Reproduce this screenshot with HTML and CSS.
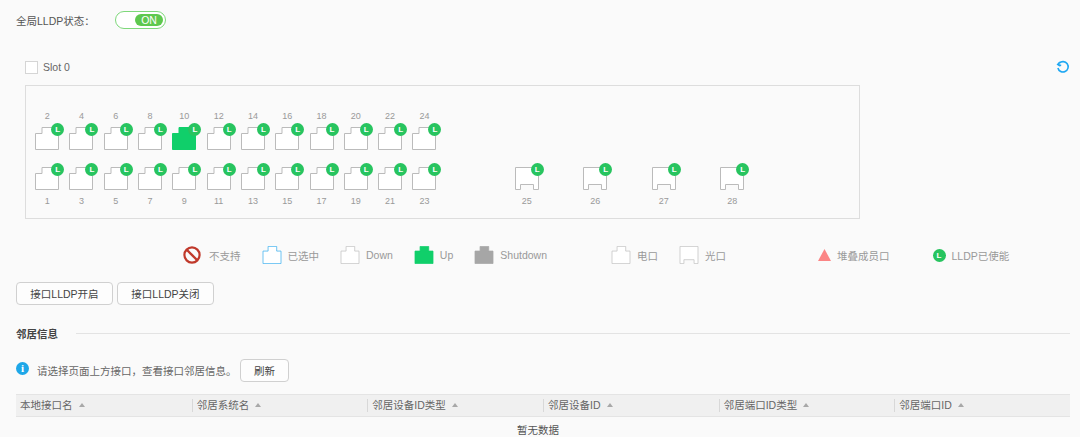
FILE: index.html
```html
<!DOCTYPE html>
<html lang="en">
<head>
    <meta charset="UTF-8">
    <meta name="viewport" content="width=device-width, initial-scale=1.0">
    <title>LLDP</title>
    <link rel="stylesheet" href="styles.css">
</head>
<body>
    <svg class="sprite" width="0" height="0">
        <symbol id="rj" viewBox="0 0 24 23"><path d="M.5 22.5V6.5H7V.5H18V6.5H23.5V22.5Z"/></symbol>
        <symbol id="sfp" viewBox="0 0 24 23"><path d="M.5.5H23.5V22.5H18.5V17.5H5.5V22.5H.5Z"/></symbol>
    </svg>

    <div class="global-row">
        <span class="global-label">全局LLDP状态：</span>
        <div class="switch"><span class="switch-on">ON</span></div>
    </div>

    <div class="slot-row">
        <span class="checkbox"></span>
        <span class="slot-name">Slot 0</span>
        <svg class="reload" viewBox="0 0 14 14" width="14" height="14"><path d="M3.2 3.2A5.2 5.2 0 1 1 1.9 8" fill="none" stroke="#1ea7f2" stroke-width="1.6"/><path d="M.4 4.6H5.2V6L3.4 6.6Z M3.6 1.2V4.8H.4Z" fill="#1ea7f2"/></svg>
    </div>

    <div class="panel">
        <div class="ports">
            <div class="cell"><span class="num">2</span><div class="port"><svg><use href="#rj"/></svg><span class="badge">L</span></div></div>
            <div class="cell"><span class="num">4</span><div class="port"><svg><use href="#rj"/></svg><span class="badge">L</span></div></div>
            <div class="cell"><span class="num">6</span><div class="port"><svg><use href="#rj"/></svg><span class="badge">L</span></div></div>
            <div class="cell"><span class="num">8</span><div class="port"><svg><use href="#rj"/></svg><span class="badge">L</span></div></div>
            <div class="cell"><span class="num">10</span><div class="port up"><svg><use href="#rj"/></svg><span class="badge">L</span></div></div>
            <div class="cell"><span class="num">12</span><div class="port"><svg><use href="#rj"/></svg><span class="badge">L</span></div></div>
            <div class="cell"><span class="num">14</span><div class="port"><svg><use href="#rj"/></svg><span class="badge">L</span></div></div>
            <div class="cell"><span class="num">16</span><div class="port"><svg><use href="#rj"/></svg><span class="badge">L</span></div></div>
            <div class="cell"><span class="num">18</span><div class="port"><svg><use href="#rj"/></svg><span class="badge">L</span></div></div>
            <div class="cell"><span class="num">20</span><div class="port"><svg><use href="#rj"/></svg><span class="badge">L</span></div></div>
            <div class="cell"><span class="num">22</span><div class="port"><svg><use href="#rj"/></svg><span class="badge">L</span></div></div>
            <div class="cell"><span class="num">24</span><div class="port"><svg><use href="#rj"/></svg><span class="badge">L</span></div></div>

            <div class="cell lower"><div class="port"><svg><use href="#rj"/></svg><span class="badge">L</span></div><span class="num">1</span></div>
            <div class="cell lower"><div class="port"><svg><use href="#rj"/></svg><span class="badge">L</span></div><span class="num">3</span></div>
            <div class="cell lower"><div class="port"><svg><use href="#rj"/></svg><span class="badge">L</span></div><span class="num">5</span></div>
            <div class="cell lower"><div class="port"><svg><use href="#rj"/></svg><span class="badge">L</span></div><span class="num">7</span></div>
            <div class="cell lower"><div class="port"><svg><use href="#rj"/></svg><span class="badge">L</span></div><span class="num">9</span></div>
            <div class="cell lower"><div class="port"><svg><use href="#rj"/></svg><span class="badge">L</span></div><span class="num">11</span></div>
            <div class="cell lower"><div class="port"><svg><use href="#rj"/></svg><span class="badge">L</span></div><span class="num">13</span></div>
            <div class="cell lower"><div class="port"><svg><use href="#rj"/></svg><span class="badge">L</span></div><span class="num">15</span></div>
            <div class="cell lower"><div class="port"><svg><use href="#rj"/></svg><span class="badge">L</span></div><span class="num">17</span></div>
            <div class="cell lower"><div class="port"><svg><use href="#rj"/></svg><span class="badge">L</span></div><span class="num">19</span></div>
            <div class="cell lower"><div class="port"><svg><use href="#rj"/></svg><span class="badge">L</span></div><span class="num">21</span></div>
            <div class="cell lower"><div class="port"><svg><use href="#rj"/></svg><span class="badge">L</span></div><span class="num">23</span></div>
        </div>
        <div class="uplinks">
            <div class="cell lower"><div class="port"><svg><use href="#sfp"/></svg><span class="badge">L</span></div><span class="num">25</span></div>
            <div class="cell lower"><div class="port"><svg><use href="#sfp"/></svg><span class="badge">L</span></div><span class="num">26</span></div>
            <div class="cell lower"><div class="port"><svg><use href="#sfp"/></svg><span class="badge">L</span></div><span class="num">27</span></div>
            <div class="cell lower"><div class="port"><svg><use href="#sfp"/></svg><span class="badge">L</span></div><span class="num">28</span></div>
        </div>
    </div>

    <div class="legend">
        <div class="legend-item">
            <svg class="forbid" viewBox="0 0 18 18" width="18" height="18"><circle cx="9" cy="9" r="7.6" fill="none" stroke="#c0392b" stroke-width="2.2"/><path d="M4 4L14 14" stroke="#c0392b" stroke-width="2.4"/></svg>
            <span>不支持</span>
        </div>
        <div class="legend-item"><svg class="key selected"><use href="#rj"/></svg><span>已选中</span></div>
        <div class="legend-item"><svg class="key"><use href="#rj"/></svg><span>Down</span></div>
        <div class="legend-item"><svg class="key key-up"><use href="#rj"/></svg><span>Up</span></div>
        <div class="legend-item"><svg class="key key-shut"><use href="#rj"/></svg><span>Shutdown</span></div>
        <div class="legend-item gap-a"><svg class="key"><use href="#rj"/></svg><span>电口</span></div>
        <div class="legend-item"><svg class="key"><use href="#sfp"/></svg><span>光口</span></div>
        <div class="legend-item gap-b">
            <svg class="triangle" viewBox="0 0 13 12" width="13" height="12"><path d="M6.5 0L13 12H0Z" fill="#fb8585"/></svg>
            <span>堆叠成员口</span>
        </div>
        <div class="legend-item gap-c"><span class="legend-badge">L</span><span>LLDP已使能</span></div>
    </div>

    <div class="actions">
        <button class="btn">接口LLDP开启</button>
        <button class="btn">接口LLDP关闭</button>
    </div>

    <div class="section-title"><span>邻居信息</span><div class="section-line"></div></div>

    <div class="notice">
        <span class="info-icon">i</span>
        <span class="notice-text">请选择页面上方接口，查看接口邻居信息。</span>
        <button class="btn btn-refresh">刷新</button>
    </div>

    <div class="table-head">
        <div class="th">本地接口名<span class="sort"></span></div>
        <div class="th">邻居系统名<span class="sort"></span></div>
        <div class="th">邻居设备ID类型<span class="sort"></span></div>
        <div class="th">邻居设备ID<span class="sort"></span></div>
        <div class="th">邻居端口ID类型<span class="sort"></span></div>
        <div class="th">邻居端口ID<span class="sort"></span></div>
    </div>
    <div class="empty">暂无数据</div>
</body>
</html>
```

FILE: styles.css
```css
html, body {
    margin: 0;
    padding: 0;
}
body {
    height: 437px;
    overflow: hidden;
    background-color: #fafafa;
    color: #666666;
    font-family: "Liberation Sans", "Noto Sans CJK SC", sans-serif;
    font-size: 10.5px;
    padding: 0 10px 0 16px;
}
.sprite {
    display: block;
    height: 0;
}

/* top switch */
.global-row {
    display: flex;
    align-items: center;
    height: 18px;
    padding-top: 11px;
}
.global-label {
    width: 99px;
    color: #555555;
}
.switch {
    box-sizing: border-box;
    width: 51px;
    height: 18px;
    padding: 2px;
    display: flex;
    justify-content: flex-end;
    background-color: #ffffff;
    border: 1px solid #7ed87a;
    border-radius: 9px;
}
.switch-on {
    width: 28px;
    height: 12px;
    line-height: 12px;
    text-align: center;
    background-color: #5ec84e;
    color: #ffffff;
    border-radius: 6px;
    font-size: 10.5px;
}

/* slot */
.slot-row {
    display: flex;
    align-items: center;
    height: 14px;
    margin-top: 31px;
    padding-left: 9px;
}
.checkbox {
    box-sizing: border-box;
    width: 13px;
    height: 13px;
    background-color: #ffffff;
    border: 1px solid #d5d5d5;
}
.slot-name {
    margin-left: 5px;
    color: #666666;
}
.reload {
    margin-left: auto;
}

/* device panel */
.panel {
    box-sizing: border-box;
    display: flex;
    align-items: flex-end;
    width: 835px;
    height: 134px;
    margin: 11px 0 0 9px;
    padding: 0 0 11px 4px;
    border: 1px solid #dddddd;
}
.ports {
    display: grid;
    grid-template-columns: repeat(12, 34.3px);
    row-gap: 17px;
}
.uplinks {
    display: flex;
    margin-left: 51px;
}
.uplinks .cell {
    width: 68.5px;
}
.cell {
    display: flex;
    flex-direction: column;
    align-items: center;
}
.num {
    height: 12px;
    line-height: 12px;
    font-size: 9px;
    color: #999999;
    margin-bottom: 5px;
}
.lower .num {
    margin: 5px 0 0;
}
.port {
    position: relative;
    width: 24px;
    height: 23px;
}
.port svg {
    display: block;
    width: 24px;
    height: 23px;
    fill: #ffffff;
    stroke: #bbbbbb;
}
.port.up svg {
    fill: #10cf6a;
    stroke: #10cf6a;
}
.badge {
    position: absolute;
    top: -4px;
    right: -5px;
    width: 13px;
    height: 13px;
    line-height: 13px;
    text-align: center;
    border-radius: 50%;
    background-color: #27c45f;
    color: #ffffff;
    font-size: 8px;
    font-weight: bold;
}

/* legend */
.legend {
    display: flex;
    align-items: center;
    height: 20px;
    margin-top: 26px;
    padding-left: 167px;
    gap: 21px;
    color: #999999;
}
.legend-item {
    display: flex;
    align-items: center;
    gap: 6px;
    white-space: nowrap;
}
.forbid {
    margin-right: 2px;
}
.key {
    width: 20px;
    height: 18px;
    fill: #ffffff;
    stroke: #c4c4c4;
}
.key.selected {
    stroke: #45b4f0;
}
.key.key-up {
    fill: #10cf6a;
    stroke: #10cf6a;
}
.key.key-shut {
    fill: #a6a6a6;
    stroke: #a6a6a6;
}
.gap-a {
    margin-left: 43px;
}
.gap-b {
    margin-left: 71px;
}
.gap-c {
    margin-left: 22px;
}
.legend-badge {
    width: 13px;
    height: 13px;
    line-height: 13px;
    text-align: center;
    border-radius: 50%;
    background-color: #27c45f;
    color: #ffffff;
    font-size: 8px;
    font-weight: bold;
}

/* buttons */
.actions {
    display: flex;
    gap: 4px;
    margin-top: 17px;
}
.btn {
    box-sizing: border-box;
    width: 97px;
    height: 23px;
    padding: 0;
    background-color: #fdfdfd;
    border: 1px solid #d0d0d0;
    border-radius: 4px;
    color: #444444;
    font-family: inherit;
    font-size: 10.5px;
}

/* neighbours */
.section-title {
    display: flex;
    align-items: center;
    height: 14px;
    margin-top: 21px;
    color: #444444;
    font-weight: bold;
}
.section-line {
    flex: 1;
    height: 1px;
    margin-left: 18px;
    background-color: #e3e3e3;
}
.notice {
    display: flex;
    align-items: center;
    margin-top: 19px;
    height: 23px;
}
.info-icon {
    width: 13px;
    height: 13px;
    margin-top: -4px;
    line-height: 13px;
    text-align: center;
    border-radius: 50%;
    background-color: #1ea7e8;
    color: #ffffff;
    font-family: "Liberation Serif", serif;
    font-size: 11px;
    font-weight: bold;
}
.notice-text {
    width: 203px;
    margin-left: 8px;
    white-space: nowrap;
}
.btn.btn-refresh {
    width: 49px;
}
.table-head {
    box-sizing: border-box;
    display: grid;
    grid-template-columns: repeat(6, 1fr);
    height: 23px;
    margin-top: 12px;
    background-color: #f0f0f0;
    border-top: 1px solid #e4e4e4;
    border-bottom: 1px solid #e4e4e4;
    align-items: center;
}
.th {
    height: 13px;
    line-height: 13px;
    padding-left: 4px;
    border-left: 1px solid #d8d8d8;
    color: #666666;
    white-space: nowrap;
}
.th:first-child {
    border-left: none;
}
.sort {
    display: inline-block;
    margin: 0 0 2px 6px;
    border-left: 3px solid transparent;
    border-right: 3px solid transparent;
    border-bottom: 4px solid #a8a8a8;
}
.empty {
    height: 26px;
    line-height: 26px;
    padding-right: 10px;
    text-align: center;
    color: #555555;
}
```
